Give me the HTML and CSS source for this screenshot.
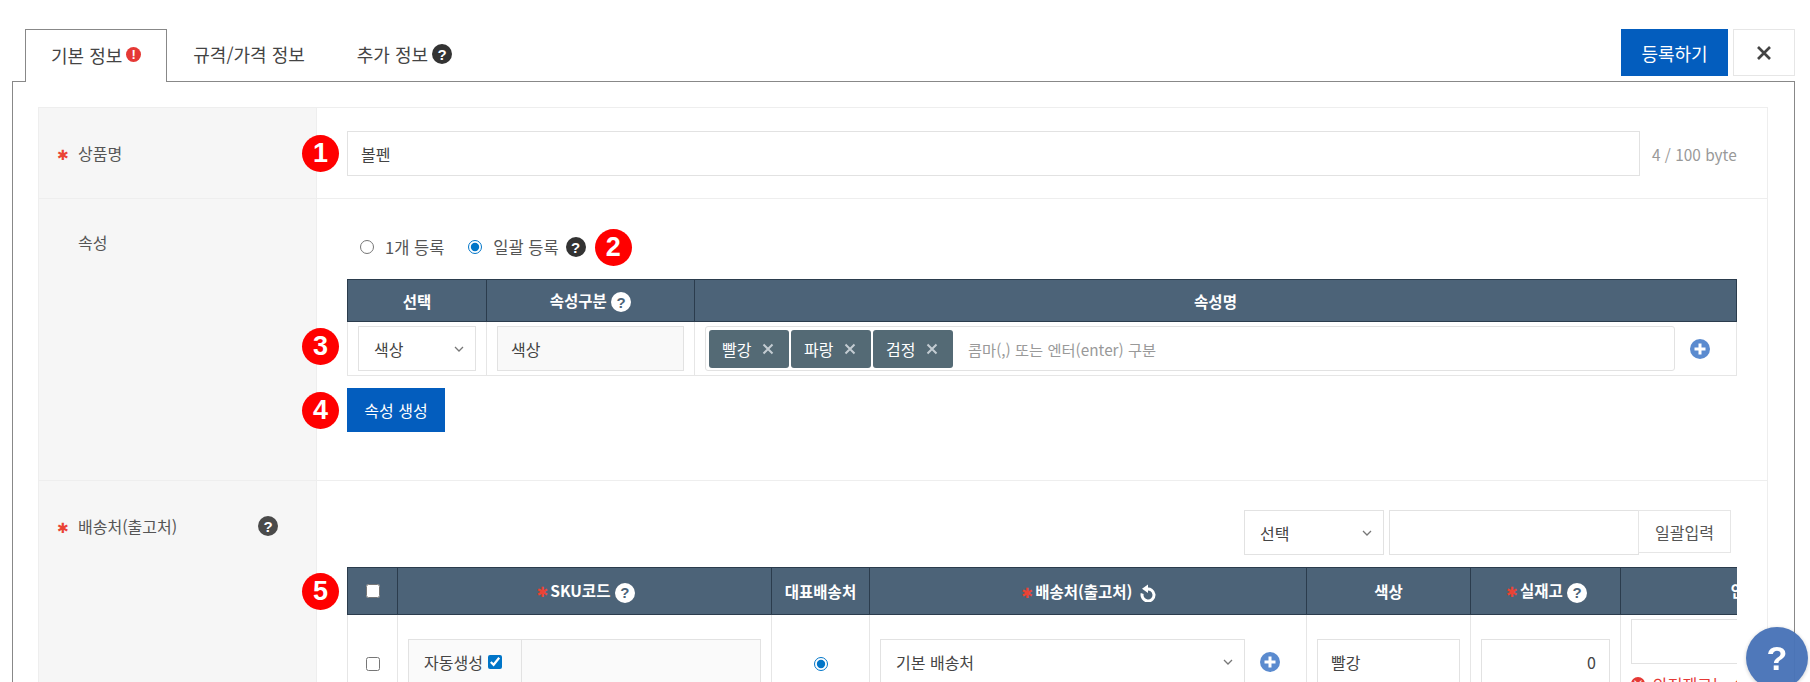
FILE: index.html
```html
<!DOCTYPE html>
<html lang="ko">

<head>
  <meta charset="UTF-8">
  <title>상품 등록</title>
  <link rel="stylesheet" href="styles.css">
</head>

<body>
  <svg class="sprite" aria-hidden="true">
    <symbol id="plus" viewBox="0 0 20 20">
      <circle cx="10" cy="10" r="10" fill="#5b8bcf"></circle>
      <path d="M10 4.5v11M4.5 10h11" stroke="#fff" stroke-width="3"></path>
    </symbol>
    <symbol id="chevron" viewBox="0 0 10 6">
      <path d="M1 1l4 4 4-4" fill="none" stroke="#777" stroke-width="1.3"></path>
    </symbol>
    <symbol id="cross" viewBox="0 0 12 12">
      <path d="M1.5 1.5l9 9M10.5 1.5l-9 9" fill="none" stroke="currentColor" stroke-width="2"></path>
    </symbol>
  </svg>

  <div class="page-head">
    <ul class="tabs">
      <li class="tab active">기본 정보 <span class="warn-icon">!</span></li>
      <li class="tab">규격/가격 정보</li>
      <li class="tab">추가 정보 <span class="help-icon">?</span></li>
    </ul>
    <div class="head-actions">
      <button class="btn-primary btn-submit">등록하기</button>
      <button class="btn-close"><svg width="16" height="16"><use href="#cross"></use></svg></button>
    </div>
  </div>

  <div class="panel">
    <div class="form-box">

      <div class="form-row row-name">
        <div class="form-label"><span class="star">✱</span>상품명</div>
        <div class="form-body">
          <div class="name-field">
            <span class="badge badge-name">1</span>
            <input class="text-input name-input" type="text" value="볼펜">
            <span class="byte-count">4 / 100 byte</span>
          </div>
        </div>
      </div>

      <div class="form-row row-attr">
        <div class="form-label label-attr"><span class="star blank"></span>속성</div>
        <div class="form-body">
          <div class="radio-row">
            <label class="radio-item"><input type="radio" name="mode"> 1개 등록</label>
            <label class="radio-item"><input type="radio" name="mode" checked> 일괄 등록</label>
            <span class="help-icon">?</span>
            <span class="badge badge-inline">2</span>
          </div>

          <div class="table-holder">
            <span class="badge badge-attr">3</span>
            <table class="grid attr-grid">
              <thead>
                <tr>
                  <th class="col-pick">선택</th>
                  <th class="col-kind">속성구분 <span class="help-icon light">?</span></th>
                  <th>속성명</th>
                </tr>
              </thead>
              <tbody>
                <tr>
                  <td>
                    <div class="select-box">색상<svg width="10" height="6"><use href="#chevron"></use></svg></div>
                  </td>
                  <td><input class="text-input readonly" type="text" value="색상" readonly></td>
                  <td>
                    <div class="tag-line">
                      <div class="tag-input">
                        <span class="tag">빨강<svg width="12" height="12"><use href="#cross"></use></svg></span>
                        <span class="tag">파랑<svg width="12" height="12"><use href="#cross"></use></svg></span>
                        <span class="tag">검정<svg width="12" height="12"><use href="#cross"></use></svg></span>
                        <span class="tag-hint">콤마(,) 또는 엔터(enter) 구분</span>
                      </div>
                      <svg class="plus" width="20" height="20"><use href="#plus"></use></svg>
                    </div>
                  </td>
                </tr>
              </tbody>
            </table>
          </div>

          <div class="make-row">
            <span class="badge badge-make">4</span>
            <button class="btn-primary btn-make">속성 생성</button>
          </div>
        </div>
      </div>

      <div class="form-row row-ship">
        <div class="form-label label-ship">
          <span><span class="star">✱</span>배송처(출고처)</span>
          <span class="help-icon gray">?</span>
        </div>
        <div class="form-body">
          <div class="bulk-row">
            <div class="select-box bulk-select">선택<svg width="10" height="6"><use href="#chevron"></use></svg></div>
            <input class="text-input bulk-input" type="text">
            <button class="btn-line">일괄입력</button>
          </div>

          <div class="table-holder">
            <span class="badge badge-sku">5</span>
            <div class="table-scroll">
              <table class="grid sku-grid">
                <thead>
                  <tr>
                    <th class="col-check"><input type="checkbox"></th>
                    <th class="col-sku"><span class="star">✱</span>SKU코드 <span class="help-icon light">?</span></th>
                    <th class="col-main">대표배송처</th>
                    <th class="col-ship">
                      <span class="star">✱</span>배송처(출고처)
                      <svg class="refresh" width="18" height="18" viewBox="0 0 18 18">
                        <path d="M7.5 5.2A6 6 0 1 1 3.2 9.5" fill="none" stroke="#fff" stroke-width="3"></path>
                        <path d="M9 0.5v8.5L3 4.8z" fill="#fff"></path>
                      </svg>
                    </th>
                    <th class="col-color">색상</th>
                    <th class="col-stock"><span class="star">✱</span>실재고 <span class="help-icon light">?</span></th>
                    <th class="col-safe">안전재고 <span class="help-icon light">?</span></th>
                  </tr>
                </thead>
                <tbody>
                  <tr>
                    <td class="center"><input type="checkbox"></td>
                    <td>
                      <div class="sku-box">
                        <label class="sku-auto">자동생성 <input type="checkbox" checked></label>
                        <input class="sku-input" type="text">
                      </div>
                    </td>
                    <td class="center"><input type="radio" name="main" checked></td>
                    <td>
                      <div class="ship-line">
                        <div class="select-box ship-select">기본 배송처<svg width="10" height="6"><use href="#chevron"></use></svg></div>
                        <svg class="plus" width="20" height="20"><use href="#plus"></use></svg>
                      </div>
                    </td>
                    <td><input class="text-input" type="text" value="빨강"></td>
                    <td><input class="text-input number" type="text" value="0"></td>
                    <td class="safe-cell">
                      <input class="text-input" type="text">
                      <p class="field-error"><span class="error-dot">×</span>안전재고는 수량을 입력해주세요</p>
                    </td>
                  </tr>
                </tbody>
              </table>
            </div>
          </div>
        </div>
      </div>

    </div>
  </div>

  <button class="float-help">?</button>
</body>

</html>
```

FILE: styles.css
```css
* {
  margin: 0;
  padding: 0;
  box-sizing: border-box;
}

html,
body {
  height: 682px;
  overflow: hidden;
}

body {
  font-family: "Noto Sans CJK KR", "Noto Sans", sans-serif;
  font-size: 16px;
  color: #444;
  background: #fff;
  padding-top: 29px;
}

.sprite {
  display: none;
}

/* header + tabs */
.page-head {
  display: flex;
  justify-content: space-between;
  height: 52px;
  margin: 0 15px 0 12px;
  padding-left: 13px;
}

.tabs {
  display: flex;
  list-style: none;
}

.tab {
  display: flex;
  align-items: center;
  gap: 4px;
  height: 53px;
  padding: 0 26px 3px;
  font-size: 18px;
  position: relative;
  z-index: 1;
}

.tab.active {
  padding: 0 25px 3px;
  background: #fff;
  border: 1px solid #888;
  border-bottom: none;
}

.head-actions {
  display: flex;
  gap: 5px;
  height: 47px;
}

.btn-primary {
  background: #035dbe;
  color: #fff;
  border: none;
  font-family: inherit;
}

.btn-submit {
  width: 107px;
  font-size: 18px;
}

.btn-close {
  width: 62px;
  background: #fff;
  border: 1px solid #e6e6e6;
  color: #444;
  display: flex;
  align-items: center;
  justify-content: center;
}

/* small round icons */
.help-icon,
.warn-icon {
  display: inline-flex;
  align-items: center;
  justify-content: center;
  flex: none;
  border-radius: 50%;
  font-family: "Liberation Sans", sans-serif;
  font-weight: 700;
  vertical-align: middle;
}

.help-icon {
  width: 20px;
  height: 20px;
  background: #333;
  color: #fff;
  font-size: 15px;
}

.help-icon.light {
  background: #fff;
  color: #4c6378;
}

.help-icon.gray {
  background: #4a4a4a;
}

.warn-icon {
  width: 15px;
  height: 15px;
  background: #e53935;
  color: #fff;
  font-size: 13px;
}

.star {
  display: inline-block;
  width: 21px;
  font-family: "DejaVu Sans", sans-serif;
  font-size: 14px;
  color: #ea4335;
}

.star.blank {
  height: 1px;
}

.grid .star {
  width: 16px;
}

/* red annotation numbers */
.badge {
  display: flex;
  align-items: center;
  justify-content: center;
  width: 37px;
  height: 37px;
  border-radius: 50%;
  background: #f00;
  color: #fff;
  font-family: "Liberation Sans", sans-serif;
  font-size: 27px;
  font-weight: 700;
  position: absolute;
  left: -45px;
  z-index: 2;
}

.badge-name {
  top: 4px;
}

.badge-inline {
  position: static;
  margin-left: 9px;
}

.badge-attr {
  top: 49px;
}

.badge-make {
  top: 4px;
}

.badge-sku {
  top: 6px;
}

/* form */
.panel {
  margin: 0 15px 0 12px;
  height: 700px;
  padding: 25px 26px 0 25px;
  border: 1px solid #888;
}

.form-box {
  border: 1px solid #eee;
  border-bottom: none;
}

.form-row {
  display: flex;
  border-bottom: 1px solid #eee;
}

.form-label {
  flex: none;
  width: 278px;
  padding-left: 18px;
  background: #f6f6f6;
  border-right: 1px solid #eee;
  color: #555;
}

.form-body {
  flex: 1;
  min-width: 0;
  padding: 0 30px 0 30px;
}

.row-name {
  height: 91px;
}

.row-name .form-label {
  padding-top: 33px;
}

.row-name .form-body {
  padding-top: 23px;
}

.name-field {
  display: flex;
  align-items: center;
  gap: 12px;
  position: relative;
}

.name-input {
  flex: 1;
}

.byte-count {
  width: 85px;
  font-size: 15.4px;
  color: #999;
  white-space: nowrap;
}

.text-input {
  width: 100%;
  height: 45px;
  padding: 0 13px;
  border: 1px solid #e2e2e2;
  font-family: inherit;
  font-size: 16px;
  color: #444;
  background: #fff;
  outline: none;
}

.text-input.readonly {
  background: #f9f9f9;
}

.text-input.number {
  text-align: right;
}

.select-box {
  display: flex;
  align-items: center;
  justify-content: space-between;
  height: 45px;
  padding: 0 11px 0 15px;
  border: 1px solid #e2e2e2;
  background: #fff;
}

/* attribute block */
.row-attr {
  height: 282px;
}

.label-attr {
  padding-top: 31px;
}

.row-attr .form-body {
  padding-top: 28px;
}

.radio-row {
  display: flex;
  align-items: center;
  height: 40px;
  margin-bottom: 12px;
  padding-left: 13px;
  font-size: 16.5px;
  color: #555;
}

.radio-item {
  display: flex;
  align-items: center;
  gap: 11px;
  margin-right: 24px;
}

.radio-item:nth-child(2) {
  margin-right: 7px;
}

input[type="radio"],
input[type="checkbox"] {
  accent-color: #0075c8;
  width: 14px;
  height: 14px;
  margin: 0;
}

.table-holder {
  position: relative;
}

.grid {
  border-collapse: collapse;
  table-layout: fixed;
}

.grid th {
  height: 47px;
  background: #4c6378;
  border: 1px solid #2b3c4d;
  color: #fff;
  font-weight: 700;
  font-size: 15.5px;
  white-space: nowrap;
}

.grid td {
  border: 1px solid #e6e6e6;
  border-top: none;
  padding: 4px 10px;
  vertical-align: middle;
}

.attr-grid {
  width: 100%;
}

.attr-grid th {
  height: 42px;
}

.col-pick {
  width: 139px;
}

.col-kind {
  width: 208px;
}

.tag-line {
  display: flex;
  align-items: center;
  gap: 15px;
  padding-right: 16px;
}

.tag-input {
  flex: 1;
  display: flex;
  align-items: center;
  gap: 2px;
  height: 45px;
  padding: 0 3px;
  border: 1px solid #e2e2e2;
  border-radius: 3px;
}

.tag {
  display: flex;
  align-items: center;
  justify-content: space-between;
  width: 80px;
  height: 38px;
  padding: 0 15px 0 13px;
  border-radius: 3px;
  background: #546a75;
  color: #fff;
}

.tag svg {
  color: #c3ccd2;
}

.tag-hint {
  margin-left: 13px;
  font-size: 15.3px;
  color: #999;
}

.plus {
  flex: none;
}

.make-row {
  position: relative;
  margin-top: 12px;
}

.btn-make {
  display: block;
  width: 98px;
  height: 44px;
  font-size: 16px;
}

/* shipping block */
.label-ship {
  display: flex;
  justify-content: space-between;
  align-items: flex-start;
  padding-top: 33px;
  padding-right: 38px;
  height: 300px;
}

.label-ship .help-icon {
  margin-top: 2px;
}

.row-ship .form-body {
  padding-top: 29px;
}

.bulk-row {
  display: flex;
  justify-content: flex-end;
  margin-bottom: 12px;
  padding-right: 6px;
}

.bulk-select {
  width: 140px;
  margin-right: 5px;
}

.bulk-input {
  width: 250px;
}

.btn-line {
  width: 93px;
  height: 43px;
  margin-left: -1px;
  background: #fff;
  border: 1px solid #e6e6e6;
  font-family: inherit;
  font-size: 16px;
  color: #555;
}

.table-scroll {
  overflow: hidden;
}

.sku-grid {
  width: 1575px;
}

.col-check {
  width: 50px;
}

.col-sku {
  width: 374px;
}

.col-main {
  width: 98px;
}

.col-ship {
  width: 437px;
}

.col-color {
  width: 164px;
}

.col-stock {
  width: 150px;
}

.col-safe {
  width: 302px;
}

.refresh {
  vertical-align: middle;
  margin-left: 2px;
}

.center {
  text-align: center;
}

.center input {
  vertical-align: middle;
}

.sku-box {
  display: flex;
  height: 45px;
  border: 1px solid #e2e2e2;
}

.sku-auto {
  display: flex;
  align-items: center;
  gap: 5px;
  flex: none;
  width: 113px;
  padding-left: 15px;
  border-right: 1px solid #e2e2e2;
  background: #fafafa;
  white-space: nowrap;
}

.sku-input {
  flex: 1;
  min-width: 0;
  border: none;
  background: #fafafa;
}

.ship-line {
  display: flex;
  align-items: center;
  gap: 15px;
  padding-right: 16px;
}

.ship-select {
  flex: 1;
}

.grid .safe-cell {
  padding-bottom: 12px;
}

.field-error {
  display: flex;
  align-items: center;
  gap: 8px;
  margin: 8px 0 0;
  color: #e53935;
  white-space: nowrap;
}

.error-dot {
  display: flex;
  align-items: center;
  justify-content: center;
  width: 14px;
  height: 14px;
  border-radius: 50%;
  background: #e53935;
  color: #fff;
  font-size: 12px;
  line-height: 1;
}

.float-help {
  position: fixed;
  left: 1746px;
  top: 627px;
  width: 62px;
  height: 62px;
  border: none;
  border-radius: 50%;
  background: #4a74b8;
  opacity: 0.97;
  color: #fff;
  font-family: "Liberation Sans", sans-serif;
  font-size: 34px;
  font-weight: 700;
  box-shadow: 0 1px 4px rgba(0, 0, 0, 0.2);
}
```
